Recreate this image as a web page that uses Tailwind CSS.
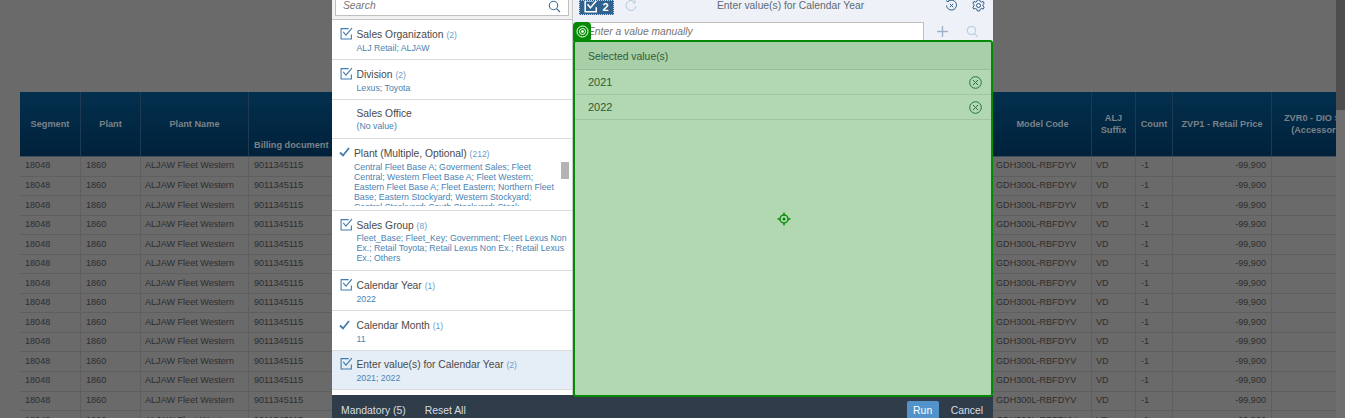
<!doctype html>
<html><head><meta charset="utf-8"><script src="https://cdn.jsdelivr.net/npm/@tailwindcss/browser@4"></script></head>
<body class="m-0 overflow-hidden bg-[#6a6a6a] font-['Liberation_Sans',Arial,sans-serif]">
<div class="relative w-[1345px] h-[418px] overflow-hidden bg-[#6a6a6a]">
  <!-- page scrollbar -->
  <div class="absolute right-0 top-0 w-[9px] h-[418px] bg-[#6f6f6f]"><div class="h-[110px] bg-[#4d4d4d]"></div></div>

  <!-- table behind -->
  <div class="absolute left-[20px] top-[92px] w-[1316px]">
    <div class="flex h-[65px] bg-gradient-to-b from-[#03304f] to-[#01213a] border-b border-[#3d4f5e] text-[9.2px] font-bold text-[#7a8288] text-center leading-[12px]">
      <div class="w-[61px] border-r border-[#1c3a52] flex items-center justify-center">Segment</div>
      <div class="w-[60px] border-r border-[#1c3a52] flex items-center justify-center">Plant</div>
      <div class="w-[108px] border-r border-[#1c3a52] flex items-center justify-center">Plant Name</div>
      <div class="w-[745px] flex items-end pb-[5px] pl-[5px]">Billing document</div>
      <div class="w-[98px] border-r border-[#1c3a52] flex items-center justify-center">Model Code</div>
      <div class="w-[44px] border-r border-[#1c3a52] flex items-center justify-center">ALJ<br>Suffix</div>
      <div class="w-[37px] border-r border-[#1c3a52] flex items-center justify-center">Count</div>
      <div class="w-[99px] border-r border-[#1c3a52] flex items-center justify-center">ZVP1 - Retail Price</div>
      <div class="w-[64px] overflow-hidden flex items-center"><span class="whitespace-nowrap ml-[12px] text-center">ZVR0 - DIO Sales<br>(Accessories)</span></div>
    </div>
    <div class="text-[9.1px] text-[#2e2e2e]">
      <div class="flex h-[19.55px] border-b border-[#5f5f5f]"><div class="w-[61px] pl-[5px] border-r border-[#5f5f5f] flex items-center">18048</div><div class="w-[60px] pl-[5px] border-r border-[#5f5f5f] flex items-center">1860</div><div class="w-[108px] pl-[4px] border-r border-[#5f5f5f] flex items-center">ALJAW Fleet Western</div><div class="w-[745px] pl-[5px] flex items-center">9011345115</div><div class="w-[98px] pl-[2px] border-r border-[#5f5f5f] flex items-center">GDH300L-RBFDYV</div><div class="w-[44px] pl-[4px] border-r border-[#5f5f5f] flex items-center">VD</div><div class="w-[37px] pl-[5px] border-r border-[#5f5f5f] flex items-center">-1</div><div class="w-[99px] pr-[5px] border-r border-[#5f5f5f] flex items-center justify-end">-99,900</div><div class="w-[64px]"></div></div>
      <div class="flex h-[19.55px] border-b border-[#5f5f5f]"><div class="w-[61px] pl-[5px] border-r border-[#5f5f5f] flex items-center">18048</div><div class="w-[60px] pl-[5px] border-r border-[#5f5f5f] flex items-center">1860</div><div class="w-[108px] pl-[4px] border-r border-[#5f5f5f] flex items-center">ALJAW Fleet Western</div><div class="w-[745px] pl-[5px] flex items-center">9011345115</div><div class="w-[98px] pl-[2px] border-r border-[#5f5f5f] flex items-center">GDH300L-RBFDYV</div><div class="w-[44px] pl-[4px] border-r border-[#5f5f5f] flex items-center">VD</div><div class="w-[37px] pl-[5px] border-r border-[#5f5f5f] flex items-center">-1</div><div class="w-[99px] pr-[5px] border-r border-[#5f5f5f] flex items-center justify-end">-99,900</div><div class="w-[64px]"></div></div>
      <div class="flex h-[19.55px] border-b border-[#5f5f5f]"><div class="w-[61px] pl-[5px] border-r border-[#5f5f5f] flex items-center">18048</div><div class="w-[60px] pl-[5px] border-r border-[#5f5f5f] flex items-center">1860</div><div class="w-[108px] pl-[4px] border-r border-[#5f5f5f] flex items-center">ALJAW Fleet Western</div><div class="w-[745px] pl-[5px] flex items-center">9011345115</div><div class="w-[98px] pl-[2px] border-r border-[#5f5f5f] flex items-center">GDH300L-RBFDYV</div><div class="w-[44px] pl-[4px] border-r border-[#5f5f5f] flex items-center">VD</div><div class="w-[37px] pl-[5px] border-r border-[#5f5f5f] flex items-center">-1</div><div class="w-[99px] pr-[5px] border-r border-[#5f5f5f] flex items-center justify-end">-99,900</div><div class="w-[64px]"></div></div>
      <div class="flex h-[19.55px] border-b border-[#5f5f5f]"><div class="w-[61px] pl-[5px] border-r border-[#5f5f5f] flex items-center">18048</div><div class="w-[60px] pl-[5px] border-r border-[#5f5f5f] flex items-center">1860</div><div class="w-[108px] pl-[4px] border-r border-[#5f5f5f] flex items-center">ALJAW Fleet Western</div><div class="w-[745px] pl-[5px] flex items-center">9011345115</div><div class="w-[98px] pl-[2px] border-r border-[#5f5f5f] flex items-center">GDH300L-RBFDYV</div><div class="w-[44px] pl-[4px] border-r border-[#5f5f5f] flex items-center">VD</div><div class="w-[37px] pl-[5px] border-r border-[#5f5f5f] flex items-center">-1</div><div class="w-[99px] pr-[5px] border-r border-[#5f5f5f] flex items-center justify-end">-99,900</div><div class="w-[64px]"></div></div>
      <div class="flex h-[19.55px] border-b border-[#5f5f5f]"><div class="w-[61px] pl-[5px] border-r border-[#5f5f5f] flex items-center">18048</div><div class="w-[60px] pl-[5px] border-r border-[#5f5f5f] flex items-center">1860</div><div class="w-[108px] pl-[4px] border-r border-[#5f5f5f] flex items-center">ALJAW Fleet Western</div><div class="w-[745px] pl-[5px] flex items-center">9011345115</div><div class="w-[98px] pl-[2px] border-r border-[#5f5f5f] flex items-center">GDH300L-RBFDYV</div><div class="w-[44px] pl-[4px] border-r border-[#5f5f5f] flex items-center">VD</div><div class="w-[37px] pl-[5px] border-r border-[#5f5f5f] flex items-center">-1</div><div class="w-[99px] pr-[5px] border-r border-[#5f5f5f] flex items-center justify-end">-99,900</div><div class="w-[64px]"></div></div>
      <div class="flex h-[19.55px] border-b border-[#5f5f5f]"><div class="w-[61px] pl-[5px] border-r border-[#5f5f5f] flex items-center">18048</div><div class="w-[60px] pl-[5px] border-r border-[#5f5f5f] flex items-center">1860</div><div class="w-[108px] pl-[4px] border-r border-[#5f5f5f] flex items-center">ALJAW Fleet Western</div><div class="w-[745px] pl-[5px] flex items-center">9011345115</div><div class="w-[98px] pl-[2px] border-r border-[#5f5f5f] flex items-center">GDH300L-RBFDYV</div><div class="w-[44px] pl-[4px] border-r border-[#5f5f5f] flex items-center">VD</div><div class="w-[37px] pl-[5px] border-r border-[#5f5f5f] flex items-center">-1</div><div class="w-[99px] pr-[5px] border-r border-[#5f5f5f] flex items-center justify-end">-99,900</div><div class="w-[64px]"></div></div>
      <div class="flex h-[19.55px] border-b border-[#5f5f5f]"><div class="w-[61px] pl-[5px] border-r border-[#5f5f5f] flex items-center">18048</div><div class="w-[60px] pl-[5px] border-r border-[#5f5f5f] flex items-center">1860</div><div class="w-[108px] pl-[4px] border-r border-[#5f5f5f] flex items-center">ALJAW Fleet Western</div><div class="w-[745px] pl-[5px] flex items-center">9011345115</div><div class="w-[98px] pl-[2px] border-r border-[#5f5f5f] flex items-center">GDH300L-RBFDYV</div><div class="w-[44px] pl-[4px] border-r border-[#5f5f5f] flex items-center">VD</div><div class="w-[37px] pl-[5px] border-r border-[#5f5f5f] flex items-center">-1</div><div class="w-[99px] pr-[5px] border-r border-[#5f5f5f] flex items-center justify-end">-99,900</div><div class="w-[64px]"></div></div>
      <div class="flex h-[19.55px] border-b border-[#5f5f5f]"><div class="w-[61px] pl-[5px] border-r border-[#5f5f5f] flex items-center">18048</div><div class="w-[60px] pl-[5px] border-r border-[#5f5f5f] flex items-center">1860</div><div class="w-[108px] pl-[4px] border-r border-[#5f5f5f] flex items-center">ALJAW Fleet Western</div><div class="w-[745px] pl-[5px] flex items-center">9011345115</div><div class="w-[98px] pl-[2px] border-r border-[#5f5f5f] flex items-center">GDH300L-RBFDYV</div><div class="w-[44px] pl-[4px] border-r border-[#5f5f5f] flex items-center">VD</div><div class="w-[37px] pl-[5px] border-r border-[#5f5f5f] flex items-center">-1</div><div class="w-[99px] pr-[5px] border-r border-[#5f5f5f] flex items-center justify-end">-99,900</div><div class="w-[64px]"></div></div>
      <div class="flex h-[19.55px] border-b border-[#5f5f5f]"><div class="w-[61px] pl-[5px] border-r border-[#5f5f5f] flex items-center">18048</div><div class="w-[60px] pl-[5px] border-r border-[#5f5f5f] flex items-center">1860</div><div class="w-[108px] pl-[4px] border-r border-[#5f5f5f] flex items-center">ALJAW Fleet Western</div><div class="w-[745px] pl-[5px] flex items-center">9011345115</div><div class="w-[98px] pl-[2px] border-r border-[#5f5f5f] flex items-center">GDH300L-RBFDYV</div><div class="w-[44px] pl-[4px] border-r border-[#5f5f5f] flex items-center">VD</div><div class="w-[37px] pl-[5px] border-r border-[#5f5f5f] flex items-center">-1</div><div class="w-[99px] pr-[5px] border-r border-[#5f5f5f] flex items-center justify-end">-99,900</div><div class="w-[64px]"></div></div>
      <div class="flex h-[19.55px] border-b border-[#5f5f5f]"><div class="w-[61px] pl-[5px] border-r border-[#5f5f5f] flex items-center">18048</div><div class="w-[60px] pl-[5px] border-r border-[#5f5f5f] flex items-center">1860</div><div class="w-[108px] pl-[4px] border-r border-[#5f5f5f] flex items-center">ALJAW Fleet Western</div><div class="w-[745px] pl-[5px] flex items-center">9011345115</div><div class="w-[98px] pl-[2px] border-r border-[#5f5f5f] flex items-center">GDH300L-RBFDYV</div><div class="w-[44px] pl-[4px] border-r border-[#5f5f5f] flex items-center">VD</div><div class="w-[37px] pl-[5px] border-r border-[#5f5f5f] flex items-center">-1</div><div class="w-[99px] pr-[5px] border-r border-[#5f5f5f] flex items-center justify-end">-99,900</div><div class="w-[64px]"></div></div>
      <div class="flex h-[19.55px] border-b border-[#5f5f5f]"><div class="w-[61px] pl-[5px] border-r border-[#5f5f5f] flex items-center">18048</div><div class="w-[60px] pl-[5px] border-r border-[#5f5f5f] flex items-center">1860</div><div class="w-[108px] pl-[4px] border-r border-[#5f5f5f] flex items-center">ALJAW Fleet Western</div><div class="w-[745px] pl-[5px] flex items-center">9011345115</div><div class="w-[98px] pl-[2px] border-r border-[#5f5f5f] flex items-center">GDH300L-RBFDYV</div><div class="w-[44px] pl-[4px] border-r border-[#5f5f5f] flex items-center">VD</div><div class="w-[37px] pl-[5px] border-r border-[#5f5f5f] flex items-center">-1</div><div class="w-[99px] pr-[5px] border-r border-[#5f5f5f] flex items-center justify-end">-99,900</div><div class="w-[64px]"></div></div>
      <div class="flex h-[19.55px] border-b border-[#5f5f5f]"><div class="w-[61px] pl-[5px] border-r border-[#5f5f5f] flex items-center">18048</div><div class="w-[60px] pl-[5px] border-r border-[#5f5f5f] flex items-center">1860</div><div class="w-[108px] pl-[4px] border-r border-[#5f5f5f] flex items-center">ALJAW Fleet Western</div><div class="w-[745px] pl-[5px] flex items-center">9011345115</div><div class="w-[98px] pl-[2px] border-r border-[#5f5f5f] flex items-center">GDH300L-RBFDYV</div><div class="w-[44px] pl-[4px] border-r border-[#5f5f5f] flex items-center">VD</div><div class="w-[37px] pl-[5px] border-r border-[#5f5f5f] flex items-center">-1</div><div class="w-[99px] pr-[5px] border-r border-[#5f5f5f] flex items-center justify-end">-99,900</div><div class="w-[64px]"></div></div>
      <div class="flex h-[19.55px] border-b border-[#5f5f5f]"><div class="w-[61px] pl-[5px] border-r border-[#5f5f5f] flex items-center">18048</div><div class="w-[60px] pl-[5px] border-r border-[#5f5f5f] flex items-center">1860</div><div class="w-[108px] pl-[4px] border-r border-[#5f5f5f] flex items-center">ALJAW Fleet Western</div><div class="w-[745px] pl-[5px] flex items-center">9011345115</div><div class="w-[98px] pl-[2px] border-r border-[#5f5f5f] flex items-center">GDH300L-RBFDYV</div><div class="w-[44px] pl-[4px] border-r border-[#5f5f5f] flex items-center">VD</div><div class="w-[37px] pl-[5px] border-r border-[#5f5f5f] flex items-center">-1</div><div class="w-[99px] pr-[5px] border-r border-[#5f5f5f] flex items-center justify-end">-99,900</div><div class="w-[64px]"></div></div>
      <div class="flex h-[19.55px] border-b border-[#5f5f5f]"><div class="w-[61px] pl-[5px] border-r border-[#5f5f5f] flex items-center">18048</div><div class="w-[60px] pl-[5px] border-r border-[#5f5f5f] flex items-center">1860</div><div class="w-[108px] pl-[4px] border-r border-[#5f5f5f] flex items-center">ALJAW Fleet Western</div><div class="w-[745px] pl-[5px] flex items-center">9011345115</div><div class="w-[98px] pl-[2px] border-r border-[#5f5f5f] flex items-center">GDH300L-RBFDYV</div><div class="w-[44px] pl-[4px] border-r border-[#5f5f5f] flex items-center">VD</div><div class="w-[37px] pl-[5px] border-r border-[#5f5f5f] flex items-center">-1</div><div class="w-[99px] pr-[5px] border-r border-[#5f5f5f] flex items-center justify-end">-99,900</div><div class="w-[64px]"></div></div>
    </div>
  </div>

  <!-- dialog -->
  <div class="absolute left-[332px] top-0 w-[661px] h-[418px] flex flex-col bg-white">
    <div class="flex h-[395px]">
      <!-- left pane -->
      <div class="w-[241px] h-full bg-white border-r border-[#c8c8c8] relative overflow-hidden">
        <div class="h-[20px] bg-[#f2f2f2] border-b border-[#c5c5c5] px-[3px] pb-[3px]">
          <div class="h-[16px] bg-white border border-[#c0c0c0] border-t-0 flex items-center justify-between px-[7px] pb-[3px] text-[10.300px] italic text-[#757575]">
            <span>Search</span>
            <svg width="13" height="13" viewBox="0 0 13 13" fill="none" stroke="#3f6d96" stroke-width="1.1"><circle cx="5.5" cy="5.5" r="4.2"/><path d="M8.6 8.6 12 12"/></svg>
          </div>
        </div>
        <div class="relative h-[40px] border-b border-[#dcdcdc] pl-[24.5px] pt-[8px]">
          <svg class="absolute left-[8px] top-[7px]" width="13" height="13" viewBox="0 0 12 12" fill="none" stroke="#427cac" stroke-width="1"><path d="M10.5 7v4H1V1.500h7"/><path d="M3 4.500 5.500 7.500 11 1"/></svg>
          <div class="text-[10.300px] leading-[13px] text-[#4a4a4a] whitespace-nowrap">Sales Organization <span class="text-[8.500px] text-[#6f9cc4]">(2)</span></div>
          <div class="text-[8.750px] leading-[12px] text-[#4a83b3] whitespace-nowrap">ALJ Retail; ALJAW</div>
        </div>
        <div class="relative h-[40px] border-b border-[#dcdcdc] pl-[24.5px] pt-[8px]">
          <svg class="absolute left-[8px] top-[7px]" width="13" height="13" viewBox="0 0 12 12" fill="none" stroke="#427cac" stroke-width="1"><path d="M10.5 7v4H1V1.500h7"/><path d="M3 4.500 5.500 7.500 11 1"/></svg>
          <div class="text-[10.300px] leading-[13px] text-[#4a4a4a] whitespace-nowrap">Division <span class="text-[8.500px] text-[#6f9cc4]">(2)</span></div>
          <div class="text-[8.750px] leading-[12px] text-[#4a83b3] whitespace-nowrap">Lexus; Toyota</div>
        </div>
        <div class="relative h-[39px] border-b border-[#dcdcdc] pl-[24.5px] pt-[7px]">
          <div class="text-[10.300px] leading-[13px] text-[#4a4a4a] whitespace-nowrap">Sales Office</div>
          <div class="text-[8.750px] leading-[12px] text-[#4a83b3] whitespace-nowrap">(No value)</div>
        </div>
        <div class="relative h-[72px] border-b border-[#dcdcdc] pl-[22px] pt-[8px] overflow-hidden">
          <svg class="absolute left-[7px] top-[8px]" width="11" height="10" viewBox="0 0 11 10" fill="none" stroke="#427cac" stroke-width="1.8"><path d="M1 5.500 4 8.500 10 1"/></svg>
          <div class="text-[10.300px] leading-[13px] text-[#4a4a4a] whitespace-nowrap">Plant (Multiple, Optional) <span class="text-[8.500px] text-[#6f9cc4]">(212)</span></div>
          <div class="text-[8.750px] leading-[10px] text-[#4a83b3] w-[205px] h-[44px] overflow-hidden mt-[1px]">Central Fleet Base A; Goverment Sales; Fleet Central; Western Fleet Base A; Fleet Western; Eastern Fleet Base A; Fleet Eastern; Northern Fleet Base; Eastern Stockyard; Western Stockyard; Central Stockyard; South Stockyard; Stock</div>
          <div class="absolute left-[229px] top-[23px] w-[8px] h-[17px] bg-[#b3b3b3]"></div>
        </div>
        <div class="relative h-[60px] border-b border-[#dcdcdc] pl-[24.500px] pt-[8px]">
          <svg class="absolute left-[8px] top-[7px]" width="13" height="13" viewBox="0 0 12 12" fill="none" stroke="#427cac" stroke-width="1"><path d="M10.5 7v4H1V1.500h7"/><path d="M3 4.500 5.500 7.500 11 1"/></svg>
          <div class="text-[10.300px] leading-[14px] text-[#4a4a4a] whitespace-nowrap">Sales Group <span class="text-[8.500px] text-[#6f9cc4]">(8)</span></div>
          <div class="text-[8.750px] leading-[10px] text-[#4a83b3] w-[214px]">Fleet_Base; Fleet_Key; Government; Fleet Lexus Non Ex.; Retail Toyota; Retail Lexus Non Ex.; Retail Lexus Ex.; Others</div>
        </div>
        <div class="relative h-[40px] border-b border-[#dcdcdc] pl-[24.500px] pt-[8px]">
          <svg class="absolute left-[8px] top-[7px]" width="13" height="13" viewBox="0 0 12 12" fill="none" stroke="#427cac" stroke-width="1"><path d="M10.5 7v4H1V1.500h7"/><path d="M3 4.500 5.500 7.500 11 1"/></svg>
          <div class="text-[10.300px] leading-[13px] text-[#4a4a4a] whitespace-nowrap">Calendar Year <span class="text-[8.500px] text-[#6f9cc4]">(1)</span></div>
          <div class="text-[8.750px] leading-[12px] text-[#4a83b3] whitespace-nowrap">2022</div>
        </div>
        <div class="relative h-[40px] border-b border-[#dcdcdc] pl-[24.500px] pt-[8px]">
          <svg class="absolute left-[7px] top-[9px]" width="11" height="10" viewBox="0 0 11 10" fill="none" stroke="#427cac" stroke-width="1.8"><path d="M1 5.500 4 8.500 10 1"/></svg>
          <div class="text-[10.300px] leading-[13px] text-[#4a4a4a] whitespace-nowrap">Calendar Month <span class="text-[8.500px] text-[#6f9cc4]">(1)</span></div>
          <div class="text-[8.750px] leading-[12px] text-[#4a83b3] whitespace-nowrap">11</div>
        </div>
        <div class="relative h-[39px] border-b border-[#dcdcdc] bg-[#e5edf6] pl-[24.500px] pt-[7px]">
          <svg class="absolute left-[8px] top-[6px]" width="13" height="13" viewBox="0 0 12 12" fill="none" stroke="#427cac" stroke-width="1"><path d="M10.5 7v4H1V1.500h7"/><path d="M3 4.500 5.500 7.500 11 1"/></svg>
          <div class="text-[10.300px] leading-[13px] text-[#4a4a4a] whitespace-nowrap">Enter value(s) for Calendar Year <span class="text-[8.500px] text-[#6f9cc4]">(2)</span></div>
          <div class="text-[8.750px] leading-[12px] text-[#4a83b3] whitespace-nowrap">2021; 2022</div>
        </div>
      </div>
      <!-- right pane -->
      <div class="flex-1 relative bg-[#eef2f8] flex flex-col">
        <div class="h-[16px] flex items-start relative pl-[6px] text-[10.300px] text-[#5d6a75]">
          <div class="w-[35px] h-[15px] bg-[#2f628e] border border-dotted border-white/70 flex items-start justify-center gap-[4px] text-white font-bold text-[11px] leading-[13px] overflow-hidden">
            <svg class="-mt-[2px]" width="14" height="14" viewBox="0 0 12 12" fill="none" stroke="white" stroke-width="1.300"><path d="M10.5 7v4H1V1.500h7"/><path d="M3 4.500 5.500 7.500 11 1"/></svg><span>2</span>
          </div>
          <svg class="ml-[11px] mt-0" width="12" height="12" viewBox="0 0 12 12" fill="none" stroke="#b5c8db" stroke-width="1"><path d="M10 2.500A5 5 0 1 0 11 6"/><path d="M10 .5v2.500H7.500"/></svg>
          <span class="absolute left-[144px] top-[-1px] whitespace-nowrap leading-[14px]">Enter value(s) for Calendar Year</span>
          <svg class="absolute left-[372px] top-[-1px]" width="13" height="13" viewBox="0 0 13 13" fill="none" stroke="#2f5f88" stroke-width="1"><path d="M3 2.500A5 5 0 1 1 1.500 6.500"/><path d="M1 1.500 3 3 4.500 1"/><path d="M4.800 4.800l3.400 3.400M8.200 4.800 4.800 8.200"/></svg>
          <svg class="absolute left-[399px] top-[-1px]" width="13" height="13" viewBox="0 0 13 13" fill="none" stroke="#2f5f88" stroke-width="1"><circle cx="6.500" cy="6.500" r="2"/><path d="M5.300 .8h2.400l.4 1.600 1.500.7 1.500-.7 1.100 2-1.300 1 .1 1.700 1.200 1-1.100 2-1.500-.6-1.500.8-.4 1.600H5.300l-.4-1.600-1.500-.8-1.500.6-1.100-2 1.200-1 0-1.700-1.200-1 1.100-2 1.500.7 1.500-.7z"/></svg>
        </div>
        <div class="h-[25px] flex items-end relative">
          <div class="ml-[5px] w-[346px] h-[19px] bg-white border border-[#bfbfbf] flex items-center pl-[9px] pt-[1px] text-[10.300px] italic text-[#757575]">Enter a value manually</div>
          <svg class="absolute left-[363px] top-[9px]" width="13" height="13" viewBox="0 0 13 13" fill="none" stroke="#9db2c9" stroke-width="1.4"><path d="M6.500 1v11M1 6.500h11"/></svg>
          <svg class="absolute left-[393px] top-[9px]" width="13" height="13" viewBox="0 0 13 13" fill="none" stroke="#bdd0e2" stroke-width="1.200"><circle cx="5.500" cy="5.500" r="4.200"/><path d="M8.600 8.600 12 12"/></svg>
        </div>
        <div class="h-[26px] bg-[#f2f2f2] border-b border-[#dcdcdc] flex items-center pl-[15px] text-[10.400px] text-[#4a4a4a] mt-[3px]">Selected value(s)</div>
        <div class="h-[25px] bg-white border-b border-[#e5e5e5] flex items-center justify-between pl-[15px] pr-[11px] text-[11px] text-[#4a4a4a]">
          <span>2021</span>
          <svg width="13" height="13" viewBox="0 0 13 13" fill="none" stroke="#356b66" stroke-width="1"><circle cx="6.500" cy="6.500" r="5.800"/><path d="M4 4l5 5M9 4l-5 5"/></svg>
        </div>
        <div class="h-[25px] bg-white border-b border-[#e5e5e5] flex items-center justify-between pl-[15px] pr-[11px] text-[11px] text-[#4a4a4a]">
          <span>2022</span>
          <svg width="13" height="13" viewBox="0 0 13 13" fill="none" stroke="#356b66" stroke-width="1"><circle cx="6.500" cy="6.500" r="5.800"/><path d="M4 4l5 5M9 4l-5 5"/></svg>
        </div>
        <div class="flex-1 bg-white"></div>
        <!-- green drop overlay -->
        <div class="absolute left-0 top-[40px] right-0 h-[357px] bg-[#008000]/30 border-2 border-[#058a05] rounded-[3px] flex items-center justify-center pl-[2px]">
          <svg width="14" height="14" viewBox="0 0 14 14" fill="none" stroke="#0a8a0a" stroke-width="1.500"><circle cx="7" cy="7" r="4"/><circle cx="7" cy="7" r="1.500" fill="#0a8a0a" stroke="none"/><path d="M7 .5v2.500M7 11v2.500M.5 7H3M11 7h2.500"/></svg>
        </div>
        <div class="absolute left-0 top-[22px] w-[18px] h-[19px] bg-[#058a05] rounded-t-[4px] rounded-br-[3px] flex items-center justify-center">
          <svg width="13" height="13" viewBox="0 0 13 13" fill="none" stroke="white" stroke-width="1"><circle cx="6.500" cy="6.500" r="5.500"/><circle cx="6.500" cy="6.500" r="3"/><circle cx="6.500" cy="6.500" r="1" fill="white"/></svg>
        </div>
      </div>
    </div>
    <div class="h-[23px] bg-[#2f3c49] flex justify-between pl-[9px] pr-[10px] text-[10.400px] leading-[12px] text-[#d9dee3]">
      <div class="flex gap-[19px] pt-[10px]"><span>Mandatory (5)</span><span>Reset All</span></div>
      <div class="flex items-start gap-[12px]"><span class="mt-[6px] w-[32px] h-[17px] bg-[#5293cb] text-white rounded-t-[2px] pt-[4px] text-center">Run</span><span class="pt-[10px]">Cancel</span></div>
    </div>
  </div>
</div>
</body></html>
